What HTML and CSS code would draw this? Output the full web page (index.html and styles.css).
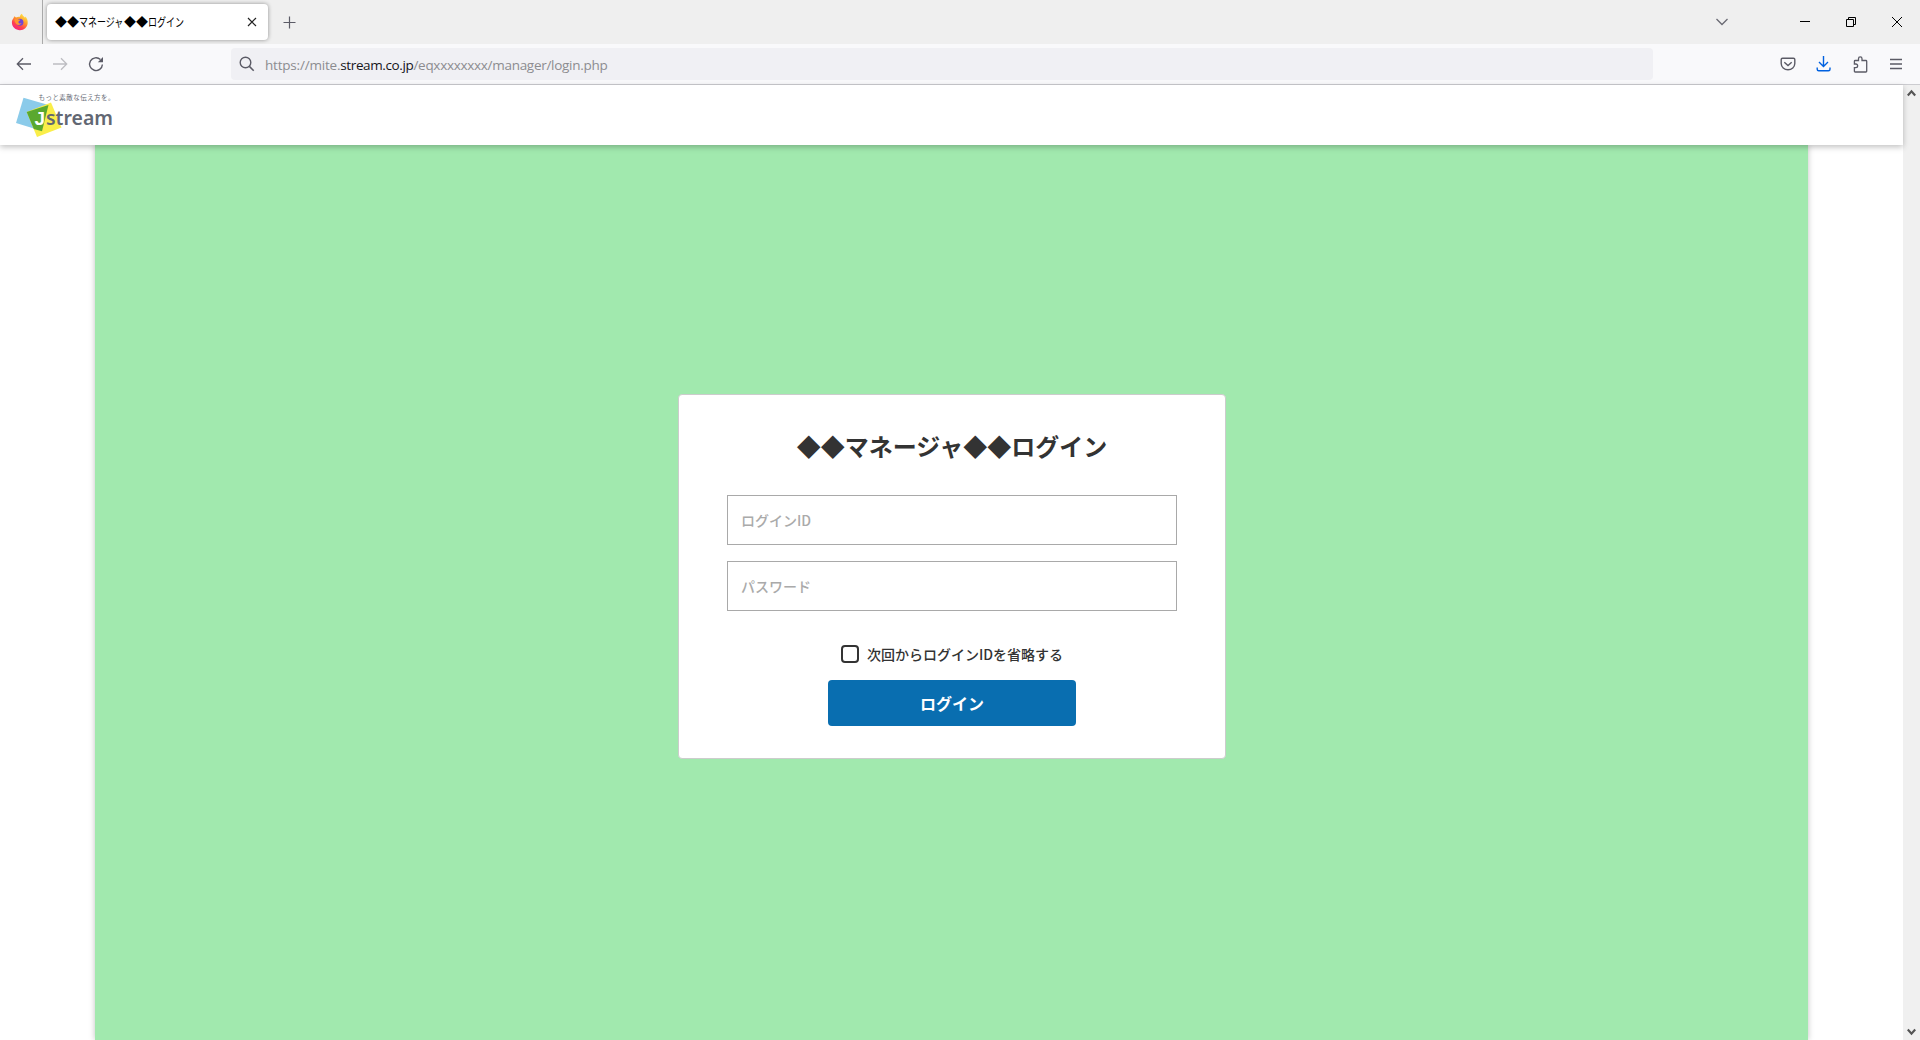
FILE: index.html
```html
<!DOCTYPE html>
<html lang="ja">
<head>
  <meta charset="UTF-8">
  <title>◆◆マネージャ◆◆ログイン</title>
  <link rel="stylesheet" href="styles.css">
</head>
<body>

  <div class="tab-bar">
    <div class="pinned">
      <svg width="18" height="18" viewBox="0 0 18 18">
        <defs>
          <linearGradient id="fox" x1="0.8" y1="0" x2="0.2" y2="1">
            <stop offset="0" stop-color="#fff04a"/>
            <stop offset="0.4" stop-color="#ff9a2b"/>
            <stop offset="0.7" stop-color="#ff4050"/>
            <stop offset="1" stop-color="#f0208a"/>
          </linearGradient>
        </defs>
        <path d="M3.4 3.2 5 4.5C6.6 3.6 8 3.5 9 3.8 9 2.5 9.7 1.2 11 .8c.3 1.8 2 2.7 3 4l.5-1.3c1.5 1.8 2.4 3.9 2.2 6.5-.3 4.2-3.5 7.2-7.8 7.2S1 14 .9 9.8C.8 7.5 1.7 6.3 2.3 5.5Z" fill="url(#fox)"/>
        <circle cx="8.9" cy="9.2" r="3.5" fill="#7044d8"/>
        <path d="M3.3 6.3c1.6-1 3.5-.6 4.2.2 1 0 1.7.2 1.8.6-.2.8-1.6.9-1.9 1.8.1 1.5 1.7 2 3.2 1.2-1 2-3.7 2.4-5.4.8C4.1 9.6 3.5 8 3.3 6.3Z" fill="#ff9630"/>
      </svg>
    </div>
    <div class="tab">
      <span class="tab-title">◆◆<span class="kana kana-5">マネージャ</span>◆◆<span class="kana kana-4">ログイン</span></span>
      <svg class="tab-close" width="10" height="10" viewBox="0 0 10 10"><path d="M1 1l8 8M9 1l-8 8" stroke="#222" stroke-width="1.2"/></svg>
    </div>
    <svg class="new-tab" width="13" height="13" viewBox="0 0 13 13"><path d="M6.5 .5v12M.5 6.5h12" stroke="#5b5b66" stroke-width="1.2"/></svg>
    <div class="window-buttons">
      <svg width="12" height="8" viewBox="0 0 12 8"><path d="M.5 1l5.5 5.5L11.5 1" fill="none" stroke="#6a6a73" stroke-width="1.3"/></svg>
      <svg width="10" height="10" viewBox="0 0 10 10"><path d="M0 4.5h10" stroke="#000"/></svg>
      <svg width="10" height="10" viewBox="0 0 10 10"><path d="M.5 2.5h7v7h-7zM2.5 2.5v-2h7v7h-2" fill="none" stroke="#000"/></svg>
      <svg width="10" height="10" viewBox="0 0 10 10"><path d="M0 0l10 10M10 0L0 10" stroke="#000"/></svg>
    </div>
  </div>

  <div class="tool-bar">
    <div class="nav-buttons">
      <svg width="16" height="14" viewBox="0 0 16 14"><path d="M15 7H1.5M7 1.3L1.3 7 7 12.7" fill="none" stroke="#5b5b66" stroke-width="1.3"/></svg>
      <svg width="16" height="14" viewBox="0 0 16 14"><path d="M1 7h13.5M9 1.300L14.7 7 9 12.7" fill="none" stroke="#bdbdc2" stroke-width="1.3"/></svg>
      <svg width="16" height="16" viewBox="0 0 16 16"><path d="M14.400 8.500A6.400 6.400 0 1 1 12.400 3.500" fill="none" stroke="#5b5b66" stroke-width="1.4"/><path d="M15 1v5.200H9.800Z" fill="#5b5b66"/></svg>
    </div>
    <div class="url-bar">
      <svg width="16" height="16" viewBox="0 0 16 16"><circle cx="6.5" cy="6.5" r="5.3" fill="none" stroke="#5b5b66" stroke-width="1.4"/><path d="M10.4 10.4l4.3 4.3" stroke="#5b5b66" stroke-width="1.5"/></svg>
      <span class="url"><span class="url-scheme">https://mite.</span><b>stream.co.jp</b><span class="url-path">/eqxxxxxxxx/manager/login.php</span></span>
    </div>
    <div class="tool-buttons">
      <svg width="16" height="16" viewBox="0 0 16 16"><path d="M2.5 2.2h11q1.3 0 1.3 1.3V7.5a6.8 6.3 0 0 1-13.6 0V3.5q0-1.3 1.3-1.3Z" fill="none" stroke="#5b5b66" stroke-width="1.4"/><path d="M4.3 6.2L8 9.6l3.7-3.4" fill="none" stroke="#5b5b66" stroke-width="1.4"/></svg>
      <svg width="16" height="16" viewBox="0 0 16 16"><path d="M7.5 0v10.3M3 6l4.5 4.5L12 6M1.2 11.5v1.8q0 1.5 1.5 1.5h9.8q1.5 0 1.5-1.5v-1.800" fill="none" stroke="#0061e0" stroke-width="1.4"/></svg>
      <svg width="16" height="17" viewBox="-0.7 0 16 17"><path d="M2.5 16q-.8 0-.8-.8v-3.500h1.400a1.800 1.800 0 0 0 0-3.700H1.700V5.300q0-.8.8-.8h3.300V2.700a1.700 1.700 0 0 1 3.500 0v1.800h3.900q.8 0 .8.8v9.900q0 .8-.8.8Z" fill="none" stroke="#5b5b66" stroke-width="1.3"/></svg>
      <svg width="16" height="16" viewBox="0 0 16 16"><path d="M2 3.5h12M2 8h12M2 12.5h12" stroke="#5b5b66" stroke-width="1.3"/></svg>
    </div>
  </div>

  <div class="viewport">
    <div class="page">
      <header class="header">
        <svg class="logo" width="110" height="54" viewBox="0 -6 110 54">
          <path d="M8.500 4.700L33.500 12 27 38 1 30Z" fill="#8bcbea"/>
          <path d="M36 9.500L46.500 34.500 22 44 11.700 19Z" fill="#faee49"/>
          <path d="M33.500 12L27 38.300 18.800 36 11.700 19Z" fill="#5aa82f"/>
          <text class="logo-tagline" x="23.500" y="6.500" textLength="76">もっと素敵な伝え方を。</text>
          <text class="logo-j" x="19.500" y="32">J</text>
          <text class="logo-name" x="31" y="32" textLength="67" lengthAdjust="spacingAndGlyphs">stream</text>
        </svg>
      </header>
      <main class="content">
        <form class="login-box">
          <h1>◆◆マネージャ◆◆ログイン</h1>
          <input type="text" class="field" placeholder="ログインID">
          <input type="password" class="field" placeholder="パスワード">
          <label class="remember"><input type="checkbox">次回からログインIDを省略する</label>
          <button type="button" class="login-btn">ログイン</button>
        </form>
      </main>
    </div>
    <div class="scrollbar">
      <svg width="9" height="8" viewBox="0 0 9 8"><path d="M.8 6.5L4.5 2.3 8.2 6.5" fill="none" stroke="#555" stroke-width="2.2"/></svg>
      <svg width="9" height="8" viewBox="0 0 9 8"><path d="M.8 1.5L4.5 5.7 8.2 1.5" fill="none" stroke="#555" stroke-width="2.2"/></svg>
    </div>
  </div>

</body>
</html>
```
FILE: styles.css
```css
* {
  box-sizing: border-box;
}

body {
  margin: 0;
  height: 1040px;
  display: flex;
  flex-direction: column;
  overflow: hidden;
  background: #fff;
  color: #333;
  font-family: "Noto Sans CJK JP", sans-serif;
}

svg {
  display: block;
  flex: none;
}

/* browser tabs */
.tab-bar {
  display: flex;
  align-items: center;
  height: 44px;
  background: #efefef;
}

.pinned {
  width: 43px;
  height: 44px;
  padding: 13px 0 0 11px;
  border-right: 1px solid #aaa;
}

.tab {
  display: flex;
  align-items: center;
  justify-content: space-between;
  width: 221px;
  height: 36px;
  margin-left: 4px;
  padding: 0 11px 0 8px;
  background: #fff;
  border-radius: 4px;
  box-shadow: 0 0 4px rgba(0,0,0,0.4);
}

.tab-title {
  display: flex;
  font-size: 12px;
  line-height: 18px;
  color: #000;
}

.kana {
  transform: scaleX(0.75);
  transform-origin: left;
  white-space: nowrap;
}

.kana-5 {
  width: 45px;
}

.kana-4 {
  width: 36px;
}

.new-tab {
  margin: 1px 0 0 15px;
}

.window-buttons {
  display: flex;
  align-items: center;
  margin-left: auto;
  padding-right: 18px;
}

.window-buttons svg:nth-child(2) {
  margin-left: 72px;
}

.window-buttons svg:nth-child(n+3) {
  margin-left: 36px;
}

/* address bar */
.tool-bar {
  display: flex;
  align-items: center;
  height: 41px;
  background: #f9f9fb;
  border-bottom: 1px solid #ccccd0;
}

.nav-buttons {
  display: flex;
  align-items: center;
  gap: 20px;
  width: 231px;
  padding-left: 16px;
}

.url-bar {
  display: flex;
  align-items: center;
  width: 1422px;
  height: 32px;
  padding-left: 8px;
  background: #f0f0f4;
  border-radius: 4px;
}

.url {
  display: flex;
  margin: 1px 0 0 10px;
  font-family: "Open Sans", "Noto Sans", sans-serif;
  font-size: 13.5px;
  color: #8c8c90;
}

.url-scheme {
  letter-spacing: -0.2px;
}

.url b {
  font-weight: normal;
  letter-spacing: -0.38px;
  color: #15141a;
}

.url-path {
  letter-spacing: -0.29px;
}

.tool-buttons {
  display: flex;
  align-items: center;
  gap: 20px;
  margin-left: auto;
  padding-right: 16px;
}

/* page */
.viewport {
  display: flex;
  flex: 1;
}

.page {
  display: flex;
  flex-direction: column;
  width: 1903px;
}

.header {
  position: relative;
  height: 60px;
  padding: 2px 0 0 15px;
  background: #fff;
  box-shadow: 0 2px 6px rgba(0,0,0,0.25);
}

.logo-tagline {
  font-size: 6.5px;
  fill: #666b75;
}

.logo-name {
  font-family: "Noto Sans", sans-serif;
  font-weight: 600;
  font-size: 20px;
  fill: #626773;
}

.logo-j {
  font-family: "Liberation Sans", sans-serif;
  font-weight: bold;
  font-size: 19px;
  fill: #fff;
}

.content {
  flex: 1;
  width: 1713px;
  margin-left: 95px;
  padding: 249px 0 0 583px;
  background: #a1e9ae;
  box-shadow: 0 0 6px rgba(0,0,0,0.25);
}

.login-box {
  display: flex;
  flex-direction: column;
  align-items: center;
  width: 548px;
  height: 365px;
  padding: 0 48px;
  background: #fff;
  border: 1px solid #ccc;
  border-radius: 4px;
}

h1 {
  margin: 33px 0 31px;
  font-size: 24px;
  line-height: 36px;
  font-weight: bold;
}

.field {
  width: 450px;
  height: 50px;
  margin-bottom: 16px;
  padding: 0 13px 1px;
  border: 1px solid #a9a9a9;
  font-family: inherit;
  font-size: 14px;
  font-weight: 500;
}

.field::placeholder {
  color: #aaa;
}

.remember {
  display: flex;
  align-items: center;
  gap: 8px;
  height: 20px;
  margin: 17px 0 16px;
  font-size: 14px;
  font-weight: 500;
}

.remember input {
  appearance: none;
  width: 18px;
  height: 18px;
  margin: 0;
  border: 2px solid #333;
  border-radius: 4px;
}

.login-btn {
  width: 248px;
  height: 46px;
  padding: 0 0 1px;
  border: none;
  border-radius: 4px;
  background: #096eb0;
  color: #fff;
  font-family: inherit;
  font-size: 16px;
  font-weight: bold;
}

.scrollbar {
  display: flex;
  flex-direction: column;
  justify-content: space-between;
  align-items: center;
  width: 17px;
  padding: 4px 0;
  background: #f0f0f0;
}
```
